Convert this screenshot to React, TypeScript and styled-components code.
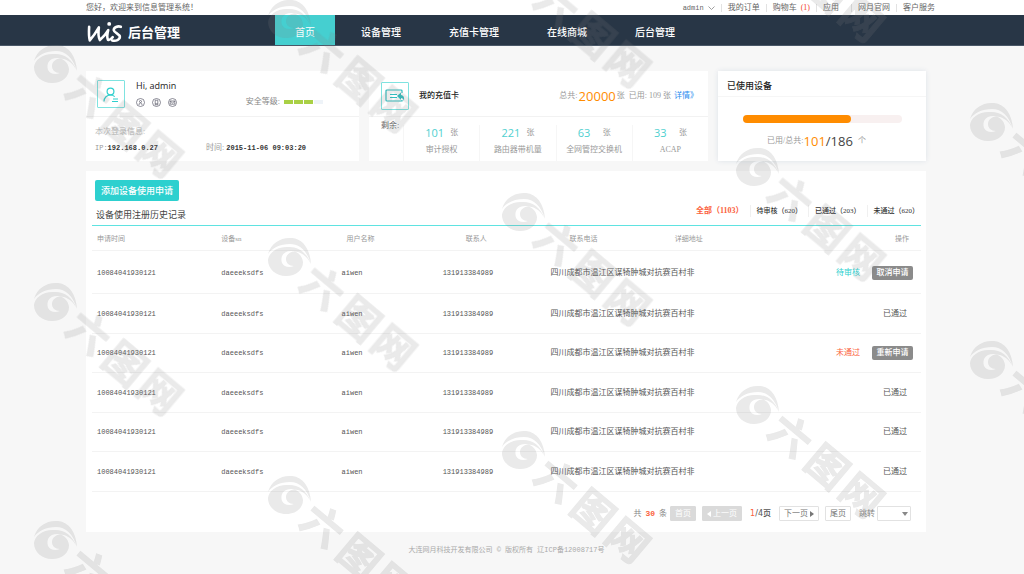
import React from "react";
import styled, { createGlobalStyle, css } from "styled-components";

const cjk = '"Noto Sans CJK SC", sans-serif';

const GlobalStyle = createGlobalStyle`
  *, *::before, *::after { box-sizing: border-box; }
  body {
    margin: 0;
    background: #f7f7f7;
    color: #555;
    font: 8px/12px "Liberation Serif", ${cjk};
  }
  a { color: inherit; text-decoration: none; }
  button, select { font: inherit; margin: 0; cursor: pointer; }
  h2, p { margin: 0; font-size: inherit; font-weight: inherit; }
`;

const Page = styled.div`
  position: relative;
  min-height: 100vh;
  overflow: hidden;
`;

const TopBar = styled.header`
  display: flex;
  justify-content: space-between;
  align-items: center;
  height: 15px;
  padding: 1px 83px 0 86px;
  background: #fff;
  color: #666;
`;

const TopLinks = styled.nav`
  display: flex;
  align-items: center;
`;

const TopLink = styled.a<{ $wide?: boolean }>`
  display: flex;
  align-items: center;
  gap: 4px;
  height: 8px;
  padding: 0 ${(p) => (p.$wide ? 12 : 6)}px 0 6px;
  & + & { border-left: 1px solid #e2e2e2; }
`;

const Mono = styled.span<{ $strong?: boolean }>`
  font: ${(p) => (p.$strong ? "bold" : "normal")} 7px/12px "Liberation Mono", monospace;
  color: ${(p) => (p.$strong ? "#333" : "inherit")};
`;

const CartCount = styled.span`
  color: #f4402c;
`;

const MainBar = styled.div`
  display: flex;
  height: 31px;
  padding: 0 86px;
  background: #283646;
  border-bottom: 1px solid #4a5868;
`;

const Brand = styled.a`
  display: flex;
  align-items: center;
  gap: 5px;
  width: 189px;
  padding: 4px 0 0 1px;
  color: #fff;
  font: 700 13px/20px ${cjk};
`;

const Tabs = styled.nav`
  display: flex;
`;

const Tab = styled.a<{ $active?: boolean }>`
  display: flex;
  align-items: center;
  padding: 3px 24px 0;
  color: #fff;
  font: 500 10px/14px ${cjk};
  ${(p) =>
    p.$active &&
    css`
      padding: 3px 20px 0;
      margin-right: 2px;
      font-weight: 400;
      background: #45cfd0;
    `}
`;

const Content = styled.main`
  display: flex;
  flex-direction: column;
  gap: 10px;
  padding: 25px 98px 0 86px;
`;

const Cards = styled.section`
  display: grid;
  grid-template-columns: 273fr 339fr 208fr;
  gap: 10px;
`;

const Card = styled.article<{ $raised?: boolean }>`
  display: flex;
  flex-direction: column;
  min-height: 90px;
  background: #fff;
  box-shadow: ${(p) => (p.$raised ? "0 0 5px #dde2e8" : "none")};
`;

const CardTop = styled.div<{ $low?: boolean }>`
  display: flex;
  align-items: center;
  gap: 10px;
  height: 46px;
  padding: ${(p) => (p.$low ? 4 : 0)}px 10px 0 ${(p) => (p.$low ? 12 : 11)}px;
  border-bottom: 1px solid #f2f2f2;
`;

const IconFrame = styled.span`
  display: grid;
  place-items: center;
  width: 28px;
  height: 28px;
  border: 1px solid #7fe3e0;
  border-radius: 1px;
`;

const Greeting = styled.div`
  display: flex;
  flex-direction: column;
  gap: 6px;
  flex: 1;
  padding-left: 1px;
  color: #222;
  font: 9px/12px "Open Sans", ${cjk};
`;

const Badges = styled.span`
  display: flex;
  gap: 7px;
`;

const Safety = styled.div`
  display: flex;
  align-items: center;
  align-self: flex-end;
  gap: 4px;
  padding: 0 25px 8px 0;
  color: #888;
`;

const Levels = styled.span`
  display: flex;
`;

const Level = styled.i<{ $on?: boolean }>`
  width: 10px;
  height: 4px;
  background: ${(p) => (p.$on ? "#a9d045" : "#eef3f8")};
  border-right: 1px solid #fff;
`;

const LoginInfo = styled.div`
  display: grid;
  grid-template-columns: 111px 1fr;
  row-gap: 4px;
  padding: 9px 9px 7px;
  color: #999;
`;

const LoginTitle = styled.p`
  grid-column: 1 / -1;
  color: #bbb;
`;

const CardName = styled.h2`
  flex: 1;
  color: #222;
  font-weight: 500;
`;

const Totals = styled.p`
  display: flex;
  align-items: center;
  gap: 1px;
  color: #999;
`;

const Big = styled.span<{ $tone?: string }>`
  color: ${(p) => p.$tone || "#444"};
  font: 13px/16px "Open Sans", sans-serif;
`;

const DetailLink = styled.a`
  color: #2a8cf0;
  padding-left: 2px;
`;

const Remaining = styled.div`
  display: grid;
  grid-template-columns: 34px repeat(4, 1fr);
  flex: 1;
`;

const RemainLabel = styled.span`
  padding: 3px 0 0 12px;
  white-space: nowrap;
  color: #666;
`;

const Quota = styled.div`
  display: flex;
  flex-direction: column;
  align-items: center;
  gap: 4px;
  margin-top: 8px;
  border-left: 1px solid #f6f6f6;
  padding-top: 1px;
  color: #999;
`;

const QuotaValue = styled.span`
  display: grid;
  grid-template-columns: 20px 8px;
  gap: 5px;
  align-items: center;
`;

const QuotaNumber = styled.span`
  color: #4fd0cf;
  font: 11px/14px "Open Sans", sans-serif;
`;

const UsedTitle = styled.h2`
  height: 26px;
  padding: 9px 9px 0;
  border-bottom: 1px solid #f6f6f6;
  color: #222;
  font: 500 9px/12px ${cjk};
`;

const Track = styled.div`
  height: 8px;
  margin: 18px 24px 10px 25px;
  border-radius: 4px;
  background: #f8f0f0;
`;

const Fill = styled.div`
  height: 100%;
  border-radius: 4px;
  background: #ff8c00;
`;

const UsedText = styled.p`
  display: flex;
  justify-content: center;
  align-items: center;
  padding-right: 11px;
  color: #999;
`;

const Unit = styled.span`
  padding-left: 5px;
`;

const Panel = styled.section`
  padding: 9px 5px 11px 6px;
  background: #fff;
`;

const PanelHead = styled.div`
  display: flex;
  justify-content: space-between;
  align-items: flex-end;
  height: 46px;
  border-bottom: 1px solid #5fe3e1;
`;

const PanelLeft = styled.div`
  display: flex;
  flex-direction: column;
  align-items: flex-start;
  gap: 8px;
  padding: 0 3px 4px;
`;

const AddButton = styled.button`
  height: 21px;
  padding: 0 6px;
  border: 0;
  border-radius: 2px;
  background: #2dd0cf;
  color: #fff;
  font: 500 9px/12px ${cjk};
`;

const PanelTitle = styled.h2`
  padding-left: 1px;
  color: #444;
  font: 9px/12px ${cjk};
`;

const Filters = styled.nav`
  display: flex;
  align-items: center;
  padding: 0 2px 8px 0;
`;

const Filter = styled.a<{ $active?: boolean }>`
  display: flex;
  height: 12px;
  color: ${(p) => (p.$active ? "#fb5f3c" : "#333")};
  font-size: ${(p) => (p.$active ? 8 : 7)}px;
  font-weight: ${(p) => (p.$active ? 700 : 500)};
  & + & { margin-left: 6px; padding-left: 6px; border-left: 1px solid #f0f0f0; }
`;

const Table = styled.table`
  width: 100%;
  table-layout: fixed;
  border-collapse: separate;
  border-spacing: 0;
  text-align: left;
`;

const HeadCell = styled.th<{ $left?: number; $end?: boolean }>`
  height: 25px;
  padding: 2px ${(p) => (p.$end ? 12 : 0)}px 0 ${(p) => p.$left || 5}px;
  border-bottom: 1px solid #f3f3f3;
  color: #999;
  font-size: 7px;
  font-weight: 400;
  text-align: ${(p) => (p.$end ? "right" : "left")};
`;

const Cell = styled.td`
  height: 39px;
  padding: 0 0 0 5px;
  border-bottom: 1px solid #f3f3f3;
  white-space: nowrap;
`;

const Row = styled.tr`
  &:nth-child(even) > td { height: 40px; }
  &:first-child > td { height: 43px; padding-top: 2px; }
`;

const Actions = styled.div<{ $plain?: boolean }>`
  display: flex;
  justify-content: flex-end;
  align-items: center;
  gap: 12px;
  padding-right: ${(p) => (p.$plain ? 14 : 8)}px;
`;

const Status = styled.span<{ $tone?: string }>`
  color: ${(p) => p.$tone || "#555"};
`;

const RowButton = styled.button`
  width: 41px;
  height: 14px;
  padding: 0;
  border: 0;
  border-radius: 2px;
  background: #8b8b8b;
  color: #fff;
  font-weight: 500;
`;

const Pager = styled.div`
  display: flex;
  justify-content: flex-end;
  align-items: center;
  gap: 6px;
  padding: 14px 10px 0 0;
  color: #888;
`;

const Summary = styled.span`
  display: flex;
  gap: 4px;
  margin-right: -3px;
`;

const Count = styled.b`
  color: #fb5f3c;
  font: bold 8px/12px "Liberation Mono", monospace;
`;

const Current = styled.span`
  padding: 0 2px;
  color: #555;
  font: 500 8px/12px "DejaVu Sans", ${cjk};
  b { color: #fb5f3c; font-weight: 400; }
`;

const PageButton = styled.button`
  display: flex;
  align-items: center;
  gap: 2px;
  height: 15px;
  padding: 0 4px;
  border: 1px solid #e2e2e2;
  border-radius: 1px;
  background: #fff;
  color: #777;
  &:disabled { background: #dadada; border-color: #dadada; color: #fff; }
`;

const Jump = styled.label`
  display: flex;
  align-items: center;
  gap: 2px;
  padding-left: 2px;
`;

const SelectWrap = styled.span`
  display: grid;
  align-items: center;
  width: 34px;
  & > * { grid-area: 1 / 1; }
  & > svg { justify-self: end; margin-right: 3px; pointer-events: none; }
`;

const JumpSelect = styled.select`
  appearance: none;
  width: 100%;
  height: 15px;
  padding: 0 10px 0 3px;
  border: 1px solid #e2e2e2;
  border-radius: 1px;
  background: #fff;
  color: #666;
`;

const Footer = styled.footer`
  padding: 12px 97px 18px 86px;
  color: #aaa;
  font: 7px/12px "Liberation Mono", ${cjk};
  text-align: center;
`;

const Overlay = styled.svg`
  position: absolute;
  inset: 0;
  width: 100%;
  height: 100%;
  pointer-events: none;
  opacity: 0.17;
  color: #808080;
`;

const MARK_COLUMNS = [0, 1, 2, 3, 4, 5, 6, 7, 8];
const MARK_ROWS = [-1, 0, 1, 2, 3, 4, 5, 6];

function Watermark() {
  return (
    <Overlay aria-hidden="true" fill="currentColor">
      <defs>
        <g id="mark">
          <path d="M-21-3C-18-14-8-20 3-19C14-18 21-8 22 7C18-6 11-13 1-13C-9-13-17-9-21-3Z" />
          <path
            fillRule="evenodd"
            d="M22 7C17-6 8-11-2-10C-13-10-20-4-21 3C-21 12-13 19-3 19C7 19 14 13 14 5C13-2 8-6 2-6C-6-6-9 0-7 6C-5 10 0 11 5 9C0 9-3 6-3 2C-3-3 3-7 9-5C15-3 19 1 22 7Z"
          />
          <g transform="rotate(40)">
            <text
              x="25 73 118"
              y="17"
              fontFamily="Noto Sans CJK SC"
              fontSize="41"
              fontWeight="700"
              stroke="currentColor"
              strokeWidth="1"
            >
              六图网
            </text>
          </g>
        </g>
      </defs>
      {MARK_COLUMNS.map((c) =>
        MARK_ROWS.map((r) => (
          <use key={`${c}-${r}`} href="#mark" x={55 + c * 234} y={64 + r * 238 - c * 45} />
        ))
      )}
    </Overlay>
  );
}

function WisLogo() {
  return (
    <svg width="36" height="22" viewBox="260 58 110 68" fill="none" stroke="#fff" strokeLinecap="round" strokeLinejoin="round" aria-hidden="true">
      <path strokeWidth="8" d="M266 76C265 92 265 106 268 118C277 108 288 92 296 78C294 92 294 106 299 117C309 108 319 97 325 86C322 98 321 110 324 116C329 118 334 114 339 108" />
      <path strokeWidth="8" d="M364 76C354 72 342 78 342 86C343 95 361 98 361 107C361 116 349 121 337 118" />
      <circle cx="328" cy="67" r="6" fill="#fff" stroke="none" />
    </svg>
  );
}

function UserIcon() {
  return (
    <svg width="18" height="18" viewBox="0 0 18 18" fill="none" stroke="#2fcfcd" strokeWidth="1.2" aria-hidden="true">
      <circle cx="8.500" cy="6.500" r="3.400" />
      <path d="M2 16.500C2 12.500 5 10 8.500 10C10.200 10 11.600 10.600 12.700 11.600M11 14H16M10 16.500H16" />
    </svg>
  );
}

function CardIcon() {
  return (
    <svg width="20" height="16" viewBox="0 0 20 16" fill="none" stroke="#2fbfc0" strokeWidth="1.2" aria-hidden="true">
      <path d="M17 5V3Q17 2 16 2H2Q1 2 1 3V12Q1 13 2 13H17V12M5 6.5H12M5 9.5H12" />
      <path d="M12 8L16 4.5V7C19 7.5 19.5 10 19 13C18.5 11 17.5 10 16 10V12Z" fill="#2fbfc0" stroke="none" />
    </svg>
  );
}

const badgePaths = [
  "M3 7C3 5 4 5 4.500 5C5.500 5 6 5.500 6 7M3.500 3.500A1 1 0 1 0 5.500 3.500A1 1 0 1 0 3.500 3.500",
  "M3.200 2.200H5.800V6.800H3.200ZM3.200 5.800H5.800",
  "M2.200 3H6.800V6.200H2.200ZM2.200 3L4.500 5L6.800 3",
];

function Badge({ d }: { d: string }) {
  return (
    <svg width="9" height="9" viewBox="0 0 9 9" fill="none" stroke="#5c5c6c" strokeWidth="0.7" aria-hidden="true">
      <circle cx="4.500" cy="4.500" r="4" />
      <path d={d} />
    </svg>
  );
}

function Triangle({ d, w = 4, h = 6 }: { d: string; w?: number; h?: number }) {
  return (
    <svg width={w} height={h} viewBox={`0 0 ${w} ${h}`} fill="currentColor" aria-hidden="true">
      <path d={d} />
    </svg>
  );
}

const quotas = [
  { value: 101, label: "审计授权" },
  { value: 221, label: "路由器带机量" },
  { value: 63, label: "全网管控交换机" },
  { value: 33, label: "ACAP" },
];

const passed = { status: "已通过" };
const records: { status: string; tone?: string; action?: string }[] = [
  { status: "待审核", tone: "#2dd0cf", action: "取消申请" },
  passed,
  { status: "未通过", tone: "#fb5f3c", action: "重新申请" },
  passed,
  passed,
  passed,
];

const used = 101;
const total = 186;
const usedBar = 68;

export default function App() {
  return (
    <Page>
      <GlobalStyle />
      <TopBar>
        <span>您好，欢迎来到信息管理系统！</span>
        <TopLinks>
          <TopLink href="#">
            <Mono>admin</Mono>
            <svg width="7" height="4" viewBox="0 0 7 4" fill="none" stroke="#888" strokeWidth="0.8" aria-hidden="true">
              <path d="M0.500 0.500L3.500 3.500L6.500 0.500" />
            </svg>
          </TopLink>
          <TopLink href="#">我的订单</TopLink>
          <TopLink href="#">
            购物车<CartCount>(1)</CartCount>
          </TopLink>
          <TopLink href="#" $wide>应用</TopLink>
          <TopLink href="#">网月官网</TopLink>
          <TopLink href="#">客户服务</TopLink>
        </TopLinks>
      </TopBar>
      <MainBar>
        <Brand href="#" aria-label="WIS 后台管理">
          <WisLogo />
          后台管理
        </Brand>
        <Tabs>
          <Tab href="#" $active>首页</Tab>
          <Tab href="#">设备管理</Tab>
          <Tab href="#">充值卡管理</Tab>
          <Tab href="#">在线商城</Tab>
          <Tab href="#">后台管理</Tab>
        </Tabs>
      </MainBar>
      <Content>
        <Cards>
          <Card>
            <CardTop>
              <IconFrame><UserIcon /></IconFrame>
              <Greeting>
                Hi, admin
                <Badges>
                  {badgePaths.map((d) => <Badge key={d} d={d} />)}
                </Badges>
              </Greeting>
              <Safety>
                安全等级:
                <Levels>
                  <Level $on /><Level $on /><Level $on /><Level />
                </Levels>
              </Safety>
            </CardTop>
            <LoginInfo>
              <LoginTitle>本次登录信息:</LoginTitle>
              <span><Mono>IP:</Mono><Mono $strong>192.168.0.27</Mono></span>
              <span>时间: <Mono $strong>2015-11-06 09:03:20</Mono></span>
            </LoginInfo>
          </Card>
          <Card>
            <CardTop $low>
              <IconFrame><CardIcon /></IconFrame>
              <CardName>我的充值卡</CardName>
              <Totals>
                总共:<Big $tone="#ff8c00">20000</Big>
                <span>张&nbsp; 已用: 109 张</span>
                <DetailLink href="#">详情》</DetailLink>
              </Totals>
            </CardTop>
            <Remaining>
              <RemainLabel>剩余:</RemainLabel>
              {quotas.map((q) => (
                <Quota key={q.label}>
                  <QuotaValue>
                    <QuotaNumber>{q.value}</QuotaNumber>张
                  </QuotaValue>
                  <span>{q.label}</span>
                </Quota>
              ))}
            </Remaining>
          </Card>
          <Card $raised>
            <UsedTitle>已使用设备</UsedTitle>
            <Track><Fill style={{ width: `${usedBar}%` }} /></Track>
            <UsedText>
              已用/总共:<Big $tone="#ff8c00">{used}</Big><Big>/{total}</Big><Unit>个</Unit>
            </UsedText>
          </Card>
        </Cards>
        <Panel>
          <PanelHead>
            <PanelLeft>
              <AddButton type="button">添加设备使用申请</AddButton>
              <PanelTitle>设备使用注册历史记录</PanelTitle>
            </PanelLeft>
            <Filters>
              <Filter href="#" $active>全部（1103）</Filter>
              <Filter href="#">待审核（620）</Filter>
              <Filter href="#">已通过（203）</Filter>
              <Filter href="#">未通过（620）</Filter>
            </Filters>
          </PanelHead>
          <Table>
            <colgroup>
              <col width="15%" />
              <col width="14.5%" />
              <col width="12.2%" />
              <col width="13%" />
              <col width="15%" />
              <col width="14%" />
              <col />
            </colgroup>
            <thead>
              <tr>
                <HeadCell>申请时间</HeadCell>
                <HeadCell>设备sn</HeadCell>
                <HeadCell $left={10}>用户名称</HeadCell>
                <HeadCell $left={28}>联系人</HeadCell>
                <HeadCell $left={24}>联系电话</HeadCell>
                <HeadCell $left={5}>详细地址</HeadCell>
                <HeadCell $end>操作</HeadCell>
              </tr>
            </thead>
            <tbody>
              {records.map((r, i) => (
                <Row key={i}>
                  <Cell><Mono>10084041930121</Mono></Cell>
                  <Cell><Mono>daeeeksdfs</Mono></Cell>
                  <Cell><Mono>aiwen</Mono></Cell>
                  <Cell><Mono>131913384989</Mono></Cell>
                  <Cell colSpan={2}>四川成都市温江区谋犄肿城对抗赛百村非</Cell>
                  <Cell>
                    <Actions $plain={!r.action}>
                      <Status $tone={r.tone}>{r.status}</Status>
                      {r.action && <RowButton type="button">{r.action}</RowButton>}
                    </Actions>
                  </Cell>
                </Row>
              ))}
            </tbody>
          </Table>
          <Pager>
            <Summary>共 <Count>30</Count> 条</Summary>
            <PageButton type="button" disabled>首页</PageButton>
            <PageButton type="button" disabled>
              <Triangle d="M4 0V6L0 3Z" />上一页
            </PageButton>
            <Current><b>1</b>/4页</Current>
            <PageButton type="button">
              下一页<Triangle d="M0 0V6L4 3Z" />
            </PageButton>
            <PageButton type="button">尾页</PageButton>
            <Jump>
              跳转
              <SelectWrap>
                <JumpSelect defaultValue="">
                  <option value="" />
                  <option value="1">1</option>
                  <option value="2">2</option>
                  <option value="3">3</option>
                  <option value="4">4</option>
                </JumpSelect>
                <Triangle d="M0 0H6L3 4Z" w={6} h={4} />
              </SelectWrap>
            </Jump>
          </Pager>
        </Panel>
      </Content>
      <Footer>大连网月科技开发有限公司 © 版权所有 辽ICP备12008717号</Footer>
      <Watermark />
    </Page>
  );
}
